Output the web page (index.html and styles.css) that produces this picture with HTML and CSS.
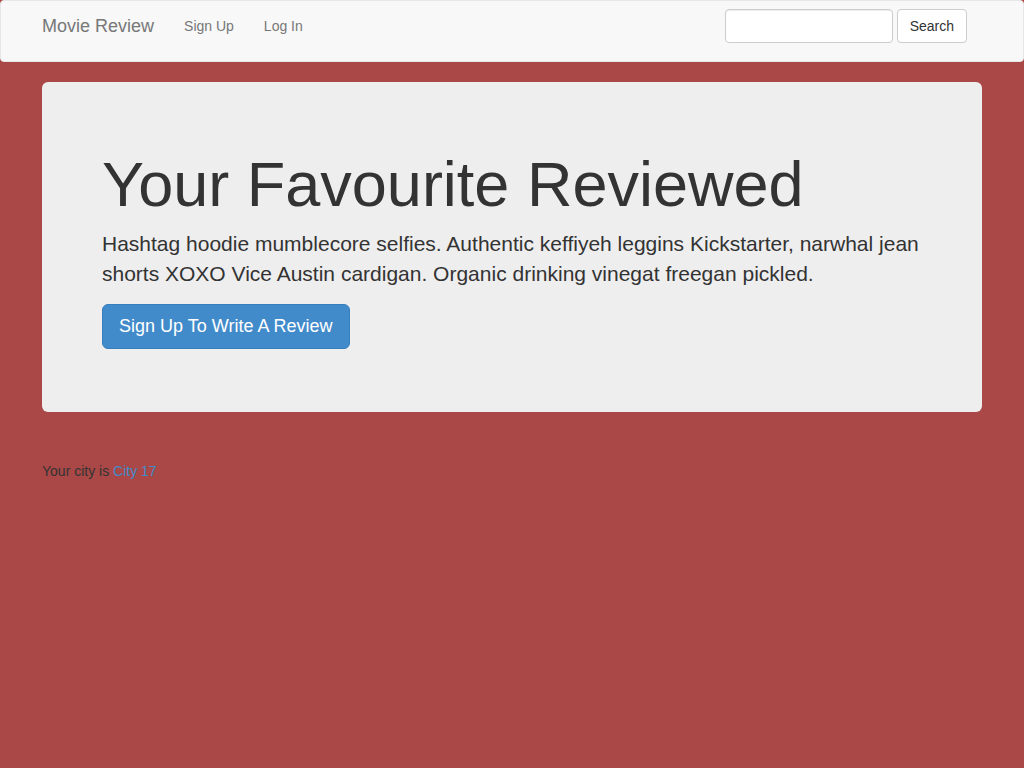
FILE: index.html
```html
<!DOCTYPE html>
<html>
<head>
<meta charset="utf-8">
<title>Movie Review</title>
<link rel="stylesheet" href="styles.css">
</head>
<body>
<nav class="navbar">
  <div class="container nav-inner">
    <a class="brand" href="#">Movie Review</a>
    <ul class="nav-links">
      <li><a href="#">Sign Up</a></li>
      <li><a href="#">Log In</a></li>
    </ul>
    <form class="nav-form">
      <input class="form-control" type="text">
      <button class="btn-default" type="button">Search</button>
    </form>
  </div>
</nav>
<main class="container">
  <section class="jumbotron">
    <h1>Your Favourite Reviewed</h1>
    <p class="lead">Hashtag hoodie mumblecore selfies. Authentic keffiyeh leggins Kickstarter, narwhal jean shorts XOXO Vice Austin cardigan. Organic drinking vinegat freegan pickled.</p>
    <a class="btn-primary" href="#">Sign Up To Write A Review</a>
  </section>
  <p class="city">Your city is <a href="#">City 17</a></p>
</main>
</body>
</html>
```

FILE: styles.css
```css
* { box-sizing: border-box; }
html, body { margin: 0; padding: 0; }
body {
  background: #a94846;
  font-family: "Liberation Sans", Arial, sans-serif;
  font-size: 14px;
  line-height: 1.42857;
  color: #333;
}
a { text-decoration: none; }
.container {
  width: 970px;
  margin: 0 auto;
  padding: 0 15px;
}
.navbar {
  background: #f8f8f8;
  border: 1px solid #e7e7e7;
  border-radius: 4px;
  height: 62px;
  margin-bottom: 20px;
}
.nav-inner {
  display: flex;
  align-items: flex-start;
  height: 50px;
}
.brand {
  font-size: 18px;
  line-height: 20px;
  padding: 15px 15px 15px 0;
  color: #777;
}
.nav-links {
  list-style: none;
  margin: 0;
  padding: 0;
  display: flex;
}
.nav-links a {
  display: block;
  padding: 15px;
  line-height: 20px;
  color: #777;
}
.nav-form {
  margin: 8px 15px 0 auto;
  display: flex;
  gap: 4px;
}
.form-control {
  width: 168px;
  height: 34px;
  border: 1px solid #ccc;
  border-radius: 4px;
  background: #fff;
  padding: 6px 12px;
  box-shadow: inset 0 1px 1px rgba(0,0,0,.075);
  font: inherit;
}
.btn-default {
  height: 34px;
  padding: 6px 12px;
  border: 1px solid #ccc;
  border-radius: 4px;
  background: #fff;
  color: #333;
  font: inherit;
  line-height: 20px;
}
.jumbotron {
  background: #eee;
  border-radius: 6px;
  padding: 48px 60px;
  height: 330px;
  margin-bottom: 30px;
}
.jumbotron h1 {
  margin: 20px 0 10px;
  font-size: 63px;
  font-weight: 500;
  line-height: 69px;
  color: #333;
}
.lead {
  margin: 0 0 15px;
  font-size: 21px;
  font-weight: 200;
  line-height: 30px;
}
.btn-primary {
  display: inline-block;
  height: 45px;
  padding: 9px 17px 10px 16px;
  font-size: 18px;
  line-height: 24px;
  border-radius: 6px;
  background: #428bca;
  border: 1px solid #357ebd;
  color: #fff;
}
.city {
  margin: 50px 0 0;
}
.city a { color: #428bca; }
```
